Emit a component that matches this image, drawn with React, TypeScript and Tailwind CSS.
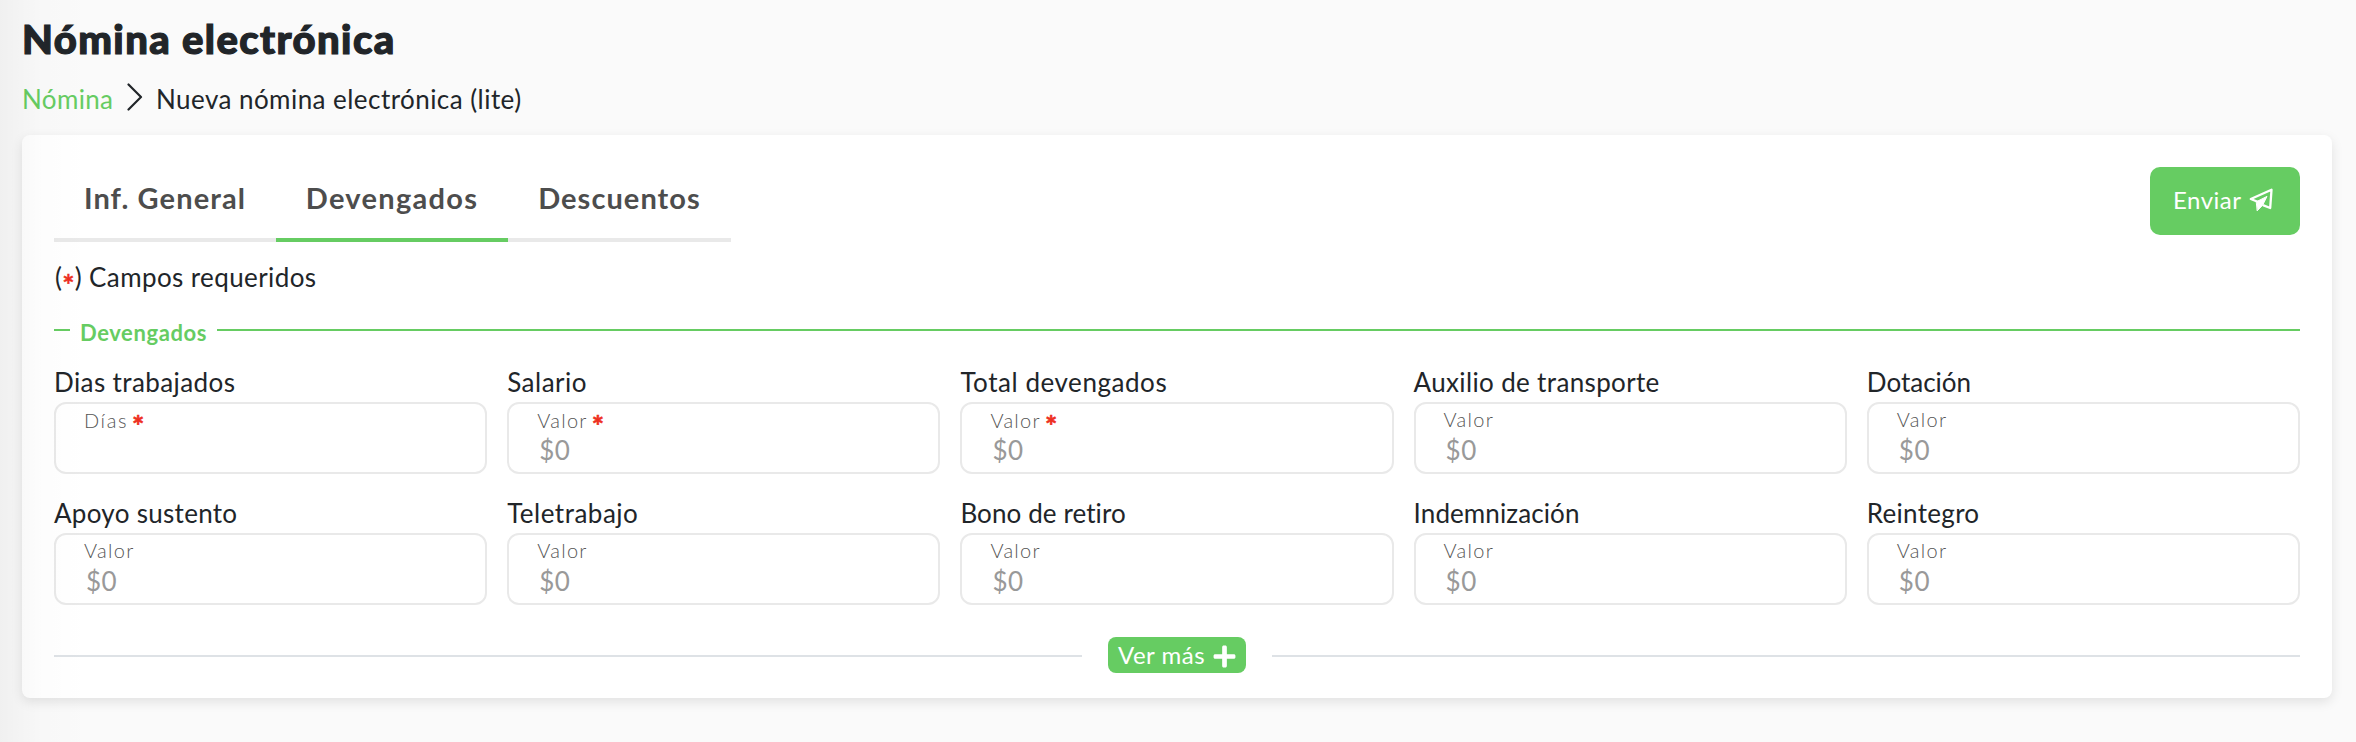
import { FaPlus } from 'react-icons/fa';

const tabs = [
  { text: 'Inf. General', box: 'w-[222px] border-[#e9e9e9]', spacing: 'tracking-[1.1px]' },
  { text: 'Devengados', box: 'w-[232px] border-[#66cc62]', spacing: 'tracking-[1.3px]' },
  { text: 'Descuentos', box: 'w-[223px] border-[#e9e9e9]', spacing: 'tracking-[1.05px]' },
];

const fields = [
  { title: 'Dias trabajados', spacing: 'tracking-[0.4px]', label: 'Días', required: true, placeholder: '' },
  { title: 'Salario', spacing: 'tracking-[0.5px]', label: 'Valor', required: true, placeholder: '$0' },
  { title: 'Total devengados', spacing: 'tracking-[0.55px]', label: 'Valor', required: true, placeholder: '$0' },
  { title: 'Auxilio de transporte', spacing: 'tracking-[0.35px]', label: 'Valor', required: false, placeholder: '$0' },
  { title: 'Dotación', spacing: 'tracking-normal', label: 'Valor', required: false, placeholder: '$0' },
  { title: 'Apoyo sustento', spacing: 'tracking-[0.3px]', label: 'Valor', required: false, placeholder: '$0' },
  { title: 'Teletrabajo', spacing: 'tracking-[0.5px]', label: 'Valor', required: false, placeholder: '$0' },
  { title: 'Bono de retiro', spacing: 'tracking-[0.1px]', label: 'Valor', required: false, placeholder: '$0' },
  { title: 'Indemnización', spacing: 'tracking-[0.1px]', label: 'Valor', required: false, placeholder: '$0' },
  { title: 'Reintegro', spacing: 'tracking-[0.3px]', label: 'Valor', required: false, placeholder: '$0' },
];

function SendIcon() {
  return (
    <svg className="h-6 w-6" viewBox="0 0 24 24" fill="none" stroke="currentColor" strokeLinejoin="round" strokeLinecap="round">
      <path d="M8 13.5 1.8 11 22.5 1.8 21.2 20 14.5 17.4" strokeWidth="2.3" />
      <path d="M7.6 13.6 18 8.4 13.6 17.2 8.4 22.6Z" fill="currentColor" strokeWidth="1" />
    </svg>
  );
}

export default function App() {
  return (
    <div className="relative h-[742px] w-[2356px] overflow-hidden bg-[#fafafa] pl-[22px] pr-6 font-['Lato',sans-serif] text-[#212529]">
      <h1 className="h-[80px] pt-[14px] text-[40px] leading-[50px] font-black tracking-[1.4px] whitespace-nowrap [-webkit-text-stroke:1.2px_#212529]">
        Nómina electrónica
      </h1>

      <nav className="flex h-[55px] items-start text-[26px] leading-[38px] whitespace-nowrap">
        <span className="w-[105px] tracking-[0.35px] text-[#66cc62]">Nómina</span>
        <svg className="mt-[2px] h-[30px] w-[16px]" viewBox="0 0 16 30" fill="none" stroke="currentColor" strokeWidth="2.2" strokeLinecap="round" strokeLinejoin="round">
          <path d="M1.5 2.5 14 15 1.5 27.5" />
        </svg>
        <span className="ml-[13px] tracking-[0.45px]">Nueva nómina electrónica (lite)</span>
      </nav>

      <main className="h-[563px] rounded-lg bg-white px-8 pt-8 shadow-[0_4px_12px_rgba(0,0,0,0.1)]">
        <div className="flex h-[75px] items-start justify-between">
          <div className="flex">
            {tabs.map(tab => (
              <button key={tab.text} className={`h-[75px] border-b-4 pb-[9px] text-[29px] font-bold whitespace-nowrap text-[#4d4d4d] ${tab.box} ${tab.spacing}`}>
                {tab.text}
              </button>
            ))}
          </div>
          <button className="flex h-[68px] w-[150px] items-center rounded-[10px] bg-[#66cc62] pb-[3px] pl-[23px] text-[24px] text-white">
            <span className="w-[76px] text-left tracking-[0.5px]">Enviar</span>
            <SendIcon />
          </button>
        </div>

        <p className="mt-[16px] h-[39px] pl-px text-[26px] leading-[38px] tracking-[0.4px] whitespace-nowrap">
          (<span className="align-[-8px] text-[29px] leading-none font-bold tracking-normal text-[#ee2d20] [-webkit-text-stroke:0.4px_#ee2d20]">*</span>) Campos requeridos
        </p>

        <div className="mt-[15px] flex h-[40px] items-start text-[#66cc62]">
          <div className="mt-[17px] h-[2px] w-4 bg-[#66cc62]" />
          <span className="w-[147px] pl-[10px] text-[22px] leading-[42px] font-bold tracking-[0.6px]">Devengados</span>
          <div className="mt-[17px] h-[2px] flex-1 bg-[#66cc62]" />
        </div>

        <div className="mt-[12px] grid grid-cols-5 gap-x-5">
          {fields.map(field => (
            <div key={field.title} className="h-[131px]">
              <div className={`h-[38px] text-[26px] leading-[36px] whitespace-nowrap ${field.spacing}`}>{field.title}</div>
              <div className="h-[72px] rounded-xl border-2 border-[#e9e9e9] pl-7">
                <div className={`h-[31px] text-[20px] font-light text-[#555] ${field.required ? 'leading-[33px]' : 'leading-[31px]'} ${field.label === 'Días' ? 'tracking-[1.6px]' : 'tracking-[1.3px]'}`}>
                  {field.label}
                  {field.required && (
                    <span className="ml-1 align-[-8px] text-[29px] leading-none font-bold tracking-normal text-[#ee2d20] [-webkit-text-stroke:0.6px_#ee2d20]">*</span>
                  )}
                </div>
                <div className="pl-[2px] text-[26px] leading-[30px] tracking-[0.5px] text-[#999]">{field.placeholder}</div>
              </div>
            </div>
          ))}
        </div>

        <div className="mt-[11px] flex items-start">
          <div className="mt-[18px] h-[2px] w-[1028px] bg-[#dee2e6]" />
          <button className="mx-[26px] flex h-9 w-[138px] items-center rounded-lg bg-[#66cc62] pb-px pl-[10px] text-[24px] text-white">
            <span className="w-[94px] text-left tracking-[0.5px]">Ver más</span>
            <FaPlus size={25} className="mt-[3px]" />
          </button>
          <div className="mt-[18px] h-[2px] flex-1 bg-[#dee2e6]" />
        </div>
      </main>

      {/* soft shade from the side menu */}
      <div className="pointer-events-none absolute inset-y-0 left-0 w-[90px] bg-linear-to-r from-black/4 via-black/1 via-45% to-transparent" />
    </div>
  );
}
